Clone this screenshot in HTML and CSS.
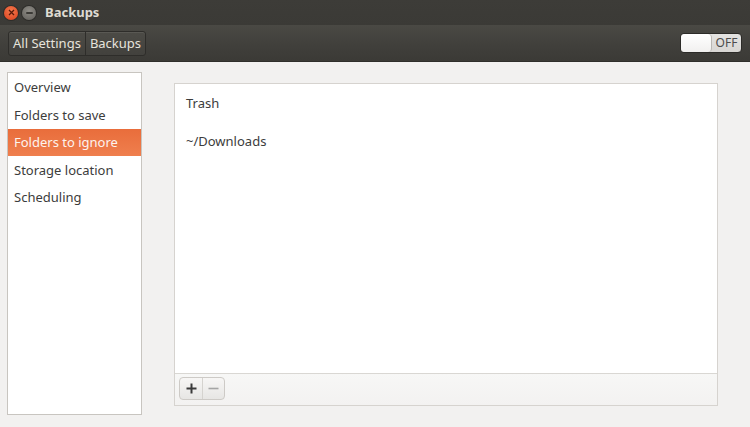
FILE: index.html
```html
<!DOCTYPE html>
<html>
<head>
<meta charset="utf-8">
<link rel="stylesheet" href="styles.css">
</head>
<body>
<div class="window">
  <header class="titlebar">
    <div class="wbtn close"><svg width="7" height="7" viewBox="0 0 7 7"><path d="M1 1L6 6M6 1L1 6" stroke="#5a1a0a" stroke-width="1.3"/></svg></div>
    <div class="wbtn min"><span class="dash"></span></div>
    <span class="title">Backups</span>
  </header>
  <div class="toolbar">
    <div class="crumbs">
      <span class="crumb">All Settings</span>
      <span class="crumb">Backups</span>
    </div>
    <div class="switch">
      <span class="knob"></span>
      <span class="off">OFF</span>
    </div>
  </div>
  <main class="content">
    <nav class="sidebar">
      <div class="item">Overview</div>
      <div class="item">Folders to save</div>
      <div class="item selected">Folders to ignore</div>
      <div class="item">Storage location</div>
      <div class="item">Scheduling</div>
    </nav>
    <section class="panel">
      <div class="list">
        <div class="row">Trash</div>
        <div class="row">~/Downloads</div>
      </div>
      <div class="listbar">
        <div class="pm">
          <span class="pmb plus"><svg width="11" height="11" viewBox="0 0 11 11"><path d="M5.5 0.5V10.5M0.5 5.5H10.5" stroke="#3a3a3a" stroke-width="2"/></svg></span>
          <span class="pmb minus"><svg width="11" height="11" viewBox="0 0 11 11"><path d="M0.5 5.5H10.5" stroke="#a5a5a5" stroke-width="1.6"/></svg></span>
        </div>
      </div>
    </section>
  </main>
</div>
</body>
</html>
```

FILE: styles.css
```css
* { box-sizing: border-box; }
html, body { margin: 0; padding: 0; }
body {
  width: 750px; height: 427px; overflow: hidden;
  font-family: "Noto Sans", "Open Sans", sans-serif;
  font-size: 13px;
  color: #3c3c3c;
  background: #f2f1f0;
}
.window { display: flex; flex-direction: column; height: 427px; }
.titlebar {
  height: 25px;
  background: linear-gradient(#3d3c38, #3b3a36);
  display: flex; align-items: center;
  padding-left: 4px;
}
.wbtn {
  width: 14px; height: 14px; border-radius: 50%;
  display: flex; align-items: center; justify-content: center;
  margin-right: 4px;
}
.close {
  background: radial-gradient(circle at 50% 35%, #f47a4e, #e2502a 70%, #c13e1c);
  box-shadow: 0 0 0 1px rgba(0,0,0,0.25);
}
.min {
  background: radial-gradient(circle at 50% 35%, #8e8c86, #6e6c67 70%, #5a5954);
  box-shadow: 0 0 0 1px rgba(0,0,0,0.25);
}
.dash { width: 7px; height: 2px; background: #3b3a36; border-radius: 1px; }
.title {
  margin-left: 5px;
  color: #dfdbd2;
  font-weight: bold;
  font-size: 13px;
  position: relative; top: -1px;
}
.toolbar {
  height: 37px;
  background: linear-gradient(#4a4944, #403f3b 60%, #3b3a36);
  display: flex; align-items: center; justify-content: space-between;
  padding: 0 8px;
  border-bottom: 1px solid #2f2e2b;
}
.crumbs {
  display: flex;
  border: 1px solid #2e2d2a;
  border-radius: 3px;
  background: linear-gradient(#4c4b46, #42413d);
  box-shadow: inset 0 1px 0 rgba(255,255,255,0.08);
  height: 25px;
}
.crumb {
  color: #e6e3dc;
  padding: 0 4px;
  line-height: 23px;
  font-size: 13px;
}
.crumb + .crumb { border-left: 1px solid #2e2d2a; }
.switch {
  width: 62px; height: 20px;
  border-radius: 4px;
  background: linear-gradient(#e4e3e1, #d8d6d3);
  border: 1px solid #2c2b28;
  display: flex; align-items: center;
}
.knob {
  width: 31px; height: 18px;
  border-radius: 4px;
  background: linear-gradient(#ffffff, #f1f0ef);
  border-right: 1px solid #b9b7b3;
}
.off {
  flex: 1; text-align: center;
  font-size: 12px; color: #4c4c4c;
  line-height: 18px;
}
.content {
  flex: 1;
  display: flex;
  padding: 10px 9px 12px 7px;
}
.sidebar {
  width: 135px;
  background: #fff;
  border: 1px solid #c8c5c0;
  padding-top: 1px;
}
.item {
  height: 27px;
  line-height: 27px;
  padding-left: 6px;
  color: #3c3c3c;
}
.item:nth-child(2), .item:nth-child(4) { height: 28px; line-height: 28px; }
.item.selected {
  background: linear-gradient(#e96d3b, #ef7f4e);
  color: #fdf3ee;
}
.panel {
  flex: 1;
  margin: 11px 23px 9px 32px;
  border: 1px solid #d6d3cf;
  display: flex; flex-direction: column;
  background: #fff;
}
.list { flex: 1; }
.row {
  height: 38px;
  line-height: 38px;
  padding-left: 11px;
}
.listbar {
  height: 32px;
  border-top: 1px solid #d9d7d3;
  background: linear-gradient(#f7f7f6, #f3f2f1);
  padding: 3px 4px;
}
.pm {
  display: inline-flex;
  border: 1px solid #cdcac6;
  border-radius: 4px;
  background: linear-gradient(#f7f6f5, #e7e6e4);
  height: 23px;
}
.pmb {
  width: 22px; display: flex; align-items: center; justify-content: center;
}
.pmb + .pmb { border-left: 1px solid #d5d3cf; }
```
